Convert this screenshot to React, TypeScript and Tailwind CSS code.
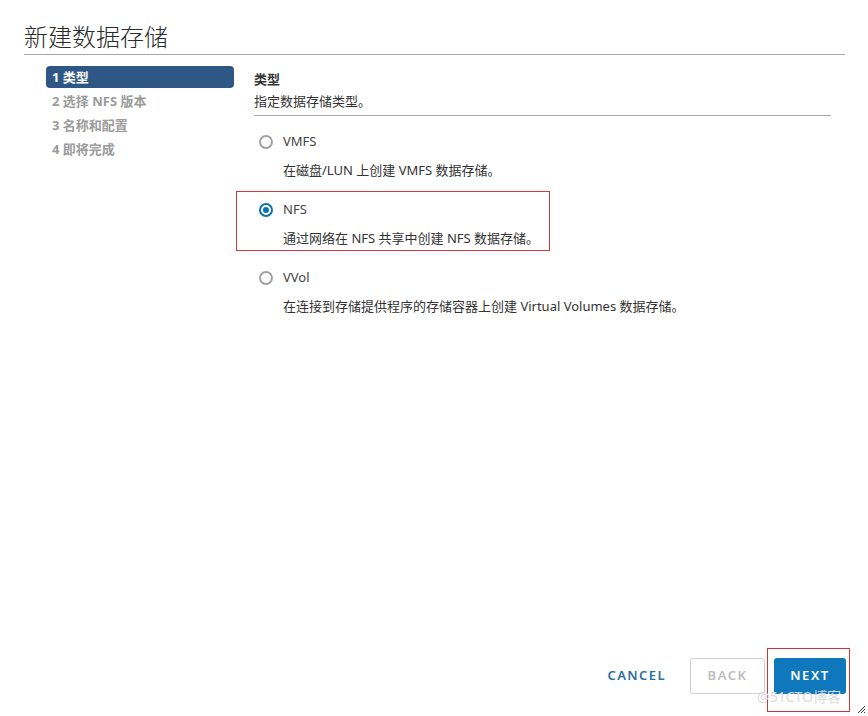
import React from 'react';

const font = { fontFamily: '"Noto Sans", "Noto Sans CJK SC", sans-serif' };

const steps = ['1 类型', '2 选择 NFS 版本', '3 名称和配置', '4 即将完成'];

const options = [
  { label: 'VMFS', desc: '在磁盘/LUN 上创建 VMFS 数据存储。', checked: false },
  { label: 'NFS', desc: '通过网络在 NFS 共享中创建 NFS 数据存储。', checked: true },
  { label: 'VVol', desc: '在连接到存储提供程序的存储容器上创建 Virtual Volumes 数据存储。', checked: false },
];

function Radio({ checked }: { checked: boolean }) {
  if (checked) {
    return (
      <span className="flex h-[14px] w-[14px] items-center justify-center rounded-full border-[2px] border-[#0b6fb3] bg-white">
        <span className="h-[6px] w-[6px] rounded-full bg-[#0b6fb3]" />
      </span>
    );
  }
  return <span className="h-[14px] w-[14px] rounded-full border-[2px] border-[#a3a3a3] bg-white" />;
}

export default function App() {
  return (
    <div style={font} className="relative flex h-[716px] w-[868px] flex-col overflow-hidden bg-white text-[#333]">
      <div className="ml-[24px] mr-[23px] mt-[21px] border-b border-[#a8a8a8] pb-[1px]">
        <h1 className="text-[24px] font-light leading-[32px] text-[#2b2b2b]">新建数据存储</h1>
      </div>

      <div className="mt-[11px] flex pl-[46px] pr-[37px]">
        <nav className="flex w-[188px] flex-col gap-[2px]">
          {steps.map((s, i) => (
            <div
              key={s}
              className={
                i === 0
                  ? 'h-[22px] rounded-[4px] bg-[#2e5785] px-[6px] text-[13px] font-bold leading-[22px] text-white'
                  : 'h-[22px] px-[6px] text-[13px] font-bold leading-[22px] text-[#9b9b9b]'
              }
            >
              {s}
            </div>
          ))}
        </nav>

        <div className="ml-[20px] flex-1">
          <div className="pt-[2px] text-[13px] font-semibold leading-[22px] text-[#333]">类型</div>
          <div className="text-[13px] leading-[22px] text-[#333]">指定数据存储类型。</div>
          <div className="mt-[3px] border-b border-[#a8a8a8]" />

          <div className="mt-[16px] flex flex-col">
            {options.map((o) => (
              <div key={o.label} className="relative h-[68px]">
                {o.checked && (
                  <div className="absolute left-[-18px] top-[-9px] h-[60px] w-[314px] border border-[#d0393f]" />
                )}
                <div className="relative flex h-[20px] items-center pl-[5px]">
                  <Radio checked={o.checked} />
                  <span className="ml-[10px] text-[13px] text-[#444]">{o.label}</span>
                </div>
                <div className="relative mt-[8px] pl-[29px] text-[13px] leading-[20px] text-[#333]">{o.desc}</div>
              </div>
            ))}
          </div>
        </div>
      </div>

      <div className="mt-auto flex items-center justify-end gap-[9px] pb-[22px] pr-[22px]">
        <button className="mr-[7px] h-[36px] px-[8px] text-[13px] font-semibold tracking-[0.11em] text-[#2a6f9e]">
          CANCEL
        </button>
        <button className="h-[36px] w-[75px] rounded-[3px] border border-[#cfcfcf] bg-white text-[13px] font-semibold tracking-[0.12em] text-[#bdbdbd]">
          BACK
        </button>
        <div className="relative">
          <div className="absolute left-[-7px] top-[-10px] h-[64px] w-[83px] border border-[#c8363c]" />
          <button className="relative h-[36px] w-[72px] rounded-[3px] bg-[#0f77bb] text-[13px] font-semibold tracking-[0.12em] text-white">
            NEXT
          </button>
        </div>
      </div>

      <div className="absolute bottom-[9px] right-[27px] text-[14px] text-[#dadada]">@51CTO博客</div>
      <svg className="absolute bottom-[2px] right-[2px]" width="10" height="10" viewBox="0 0 10 10">
        <path d="M9 2 L2 9 M9 5 L5 9 M9 8 L8 9" stroke="#333" strokeWidth="1" />
      </svg>
    </div>
  );
}
